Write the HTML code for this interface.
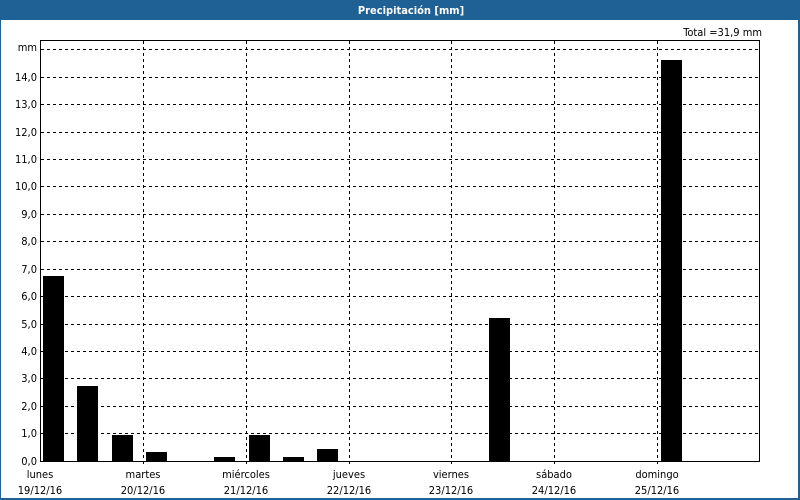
<!DOCTYPE html>
<html><head><meta charset="utf-8"><style>
html,body{margin:0;padding:0;background:#fff}
svg{display:block}
text{font-family:"DejaVu Sans Condensed","Liberation Sans",sans-serif;font-size:11px;fill:#000}
</style></head><body>
<svg width="800" height="500" viewBox="0 0 800 500" xmlns="http://www.w3.org/2000/svg">
<rect x="0" y="0" width="800" height="500" fill="#1f6095"/>
<rect x="1" y="20" width="797" height="478" fill="#fff"/>
<text x="411" y="14" text-anchor="middle" style="font-weight:bold;fill:#fff;font-size:11px">Precipitación [mm]</text>
<text x="762" y="36" text-anchor="end">Total =31,9 mm</text>
<g stroke="#000" stroke-width="1" stroke-dasharray="3,3" shape-rendering="crispEdges">
<line x1="41" y1="49.5" x2="760" y2="49.5"/>
<line x1="41" y1="77.5" x2="760" y2="77.5"/>
<line x1="41" y1="104.5" x2="760" y2="104.5"/>
<line x1="41" y1="132.5" x2="760" y2="132.5"/>
<line x1="41" y1="159.5" x2="760" y2="159.5"/>
<line x1="41" y1="186.5" x2="760" y2="186.5"/>
<line x1="41" y1="214.5" x2="760" y2="214.5"/>
<line x1="41" y1="241.5" x2="760" y2="241.5"/>
<line x1="41" y1="269.5" x2="760" y2="269.5"/>
<line x1="41" y1="296.5" x2="760" y2="296.5"/>
<line x1="41" y1="324.5" x2="760" y2="324.5"/>
<line x1="41" y1="351.5" x2="760" y2="351.5"/>
<line x1="41" y1="378.5" x2="760" y2="378.5"/>
<line x1="41" y1="406.5" x2="760" y2="406.5"/>
<line x1="41" y1="433.5" x2="760" y2="433.5"/>
<line x1="143.5" y1="41" x2="143.5" y2="465"/>
<line x1="246.5" y1="41" x2="246.5" y2="465"/>
<line x1="349.5" y1="41" x2="349.5" y2="465"/>
<line x1="451.5" y1="41" x2="451.5" y2="465"/>
<line x1="554.5" y1="41" x2="554.5" y2="465"/>
<line x1="657.5" y1="41" x2="657.5" y2="465"/>
</g>
<g fill="#000" shape-rendering="crispEdges">
<rect x="43" y="276" width="21" height="185"/>
<rect x="77" y="386" width="21" height="75"/>
<rect x="112" y="435" width="21" height="26"/>
<rect x="146" y="452" width="21" height="9"/>
<rect x="214" y="457" width="21" height="4"/>
<rect x="249" y="435" width="21" height="26"/>
<rect x="283" y="457" width="21" height="4"/>
<rect x="317" y="449" width="21" height="12"/>
<rect x="489" y="318" width="21" height="143"/>
<rect x="661" y="60" width="21" height="401"/>
</g>
<rect x="40.5" y="40.5" width="719" height="421" fill="none" stroke="#000" stroke-width="1" shape-rendering="crispEdges"/>
<g text-anchor="end">
<text x="37" y="51">mm</text>
<text x="37" y="81">14,0</text>
<text x="37" y="108">13,0</text>
<text x="37" y="136">12,0</text>
<text x="37" y="163">11,0</text>
<text x="37" y="190">10,0</text>
<text x="37" y="218">9,0</text>
<text x="37" y="245">8,0</text>
<text x="37" y="273">7,0</text>
<text x="37" y="300">6,0</text>
<text x="37" y="328">5,0</text>
<text x="37" y="355">4,0</text>
<text x="37" y="382">3,0</text>
<text x="37" y="410">2,0</text>
<text x="37" y="437">1,0</text>
<text x="37" y="465">0,0</text>
</g>
<g text-anchor="middle">
<text x="40" y="478">lunes</text><text x="40" y="494">19/12/16</text>
<text x="143" y="478">martes</text><text x="143" y="494">20/12/16</text>
<text x="246" y="478">miércoles</text><text x="246" y="494">21/12/16</text>
<text x="349" y="478">jueves</text><text x="349" y="494">22/12/16</text>
<text x="451" y="478">viernes</text><text x="451" y="494">23/12/16</text>
<text x="554" y="478">sábado</text><text x="554" y="494">24/12/16</text>
<text x="657" y="478">domingo</text><text x="657" y="494">25/12/16</text>
</g>
</svg>
</body></html>
